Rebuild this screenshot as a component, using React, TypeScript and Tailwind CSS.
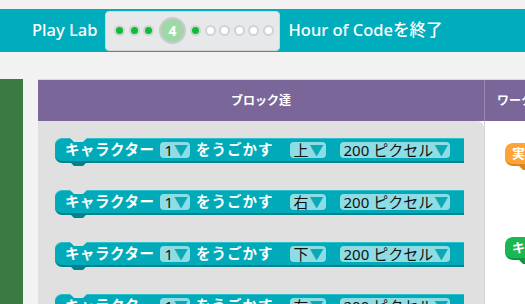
import React from 'react';

const jp = { fontFamily: '"Noto Sans", "Noto Sans CJK JP", sans-serif' };

function Dot({ done }: { done: boolean }) {
  return (
    <span
      className={`w-[11px] h-[11px] shrink-0 rounded-full border-2 border-[#d0d2d4] ${done ? 'bg-[#0cbf32]' : 'bg-white'}`}
    />
  );
}

function Field({ label }: { label: string }) {
  return (
    <span className="flex items-center h-[16px] rounded-[4px] bg-[#8fdde4] pl-[4px] pr-[2px] text-[15px] leading-none text-[#111] font-normal">
      {label}
      <span className="text-[#0aa9b5] text-[14px] ml-[1px]">▼</span>
    </span>
  );
}

function MoveBlock({ dir }: { dir: string }) {
  return (
    <div className="relative w-[409px] h-[25px] mb-[27px]">
      <div className="flex items-center h-[25px] rounded-l-[7px] bg-[#00aab8] border-t border-[#2cc0cb] border-b-2 border-b-[#00838e] pl-[10px] text-white text-[14.5px] font-bold whitespace-nowrap">
        <span className="tracking-[0.5px]">キャラクター</span>
        <span className="ml-[6px]"><Field label="1" /></span>
        <span className="ml-[6px] tracking-[1px]">をうごかす</span>
        <span className="ml-[16px]"><Field label={dir} /></span>
        <span className="ml-[14px]"><Field label="200 ピクセル" /></span>
      </div>
      {/* notch top */}
      <svg className="absolute left-[15px] top-0" width="18" height="5" viewBox="0 0 18 5">
        <path d="M0 0 L4 4 L13 4 L17 0 Z" fill="#e0e0e0" />
      </svg>
      {/* tab bottom */}
      <svg className="absolute left-[15px] top-[24px]" width="18" height="5" viewBox="0 0 18 5">
        <path d="M0 0 L4 4 L13 4 L17 0 Z" fill="#00838e" />
      </svg>
    </div>
  );
}

export default function App() {
  return (
    <div className="w-[525px] h-[304px] overflow-hidden bg-[#f2f2f2] flex flex-col" style={jp}>
      <div className="h-[9px] shrink-0" />

      {/* header */}
      <div className="h-[43px] shrink-0 bg-[#00adbc] flex items-center pl-[32px] text-white text-[16.5px] font-medium whitespace-nowrap">
        <span>Play Lab</span>
        <div className="ml-[8px] h-[40px] w-[175px] shrink-0 rounded-[4px] bg-[#e7e8ea] border border-[#d3d5d7] flex items-center pl-[8px] gap-[3.5px]">
          <Dot done />
          <Dot done />
          <Dot done />
          <span className="w-[27px] h-[27px] mx-[1px] shrink-0 rounded-full bg-[#9fd8a6] border-2 border-[#c9cbcd] flex items-center justify-center text-white text-[14px] font-bold">
            4
          </span>
          <Dot done />
          <Dot done={false} />
          <Dot done={false} />
          <Dot done={false} />
          <Dot done={false} />
          <Dot done={false} />
        </div>
        <span className="ml-[8px]">Hour of Codeを終了</span>
      </div>

      <div className="h-[27px] shrink-0" />

      <div className="flex flex-1 min-h-0">
        <div className="w-[23px] shrink-0 bg-[#3b7a40]" />
        <div className="w-[15px] shrink-0" />

        <div className="flex flex-col flex-1 min-w-0 border-t border-[#d8d8d8]">
          {/* column headers */}
          <div className="h-[41px] shrink-0 bg-[#7a6699] flex text-white text-[12px] font-bold whitespace-nowrap">
            <div className="w-[446px] shrink-0 flex items-center justify-center">ブロック達</div>
            <div className="flex-1 min-w-0 overflow-hidden border-l border-[#9a8cb0] flex items-center pl-[12px]">ワークスペース</div>
          </div>

          <div className="flex flex-1 bg-white">
            {/* toolbox */}
            <div className="w-[446px] shrink-0 bg-[#e0e0e0] rounded-tr-[7px] pt-[17px] pl-[17px]">
              <MoveBlock dir="上" />
              <MoveBlock dir="右" />
              <MoveBlock dir="下" />
              <MoveBlock dir="左" />
            </div>

            {/* workspace */}
            <div className="flex-1 min-w-0 overflow-hidden border-l border-[#d0d0d0] pl-[20px] pt-[22px]">
              <div className="relative w-[60px]">
                <div className="h-[23px] w-[60px] rounded-l-[8px] bg-[#ffa237] border-b-2 border-[#e0831a] text-white text-[13px] font-bold pl-[7px] leading-[21px] whitespace-nowrap">
                  実行
                </div>
                <svg className="absolute left-[14px] top-[23px]" width="18" height="5" viewBox="0 0 18 5">
                  <path d="M0 0 L4 4 L13 4 L17 0 Z" fill="#e0831a" />
                </svg>
              </div>
              <div className="relative w-[60px] mt-[71px]">
                <div className="h-[23px] w-[60px] rounded-l-[8px] bg-[#1ab852] border-b-2 border-[#0e9640] text-white text-[13px] font-bold pl-[7px] leading-[21px] whitespace-nowrap">
                  キャ
                </div>
                <svg className="absolute left-[14px] top-[23px]" width="18" height="5" viewBox="0 0 18 5">
                  <path d="M0 0 L4 4 L13 4 L17 0 Z" fill="#0e9640" />
                </svg>
              </div>
            </div>
          </div>
        </div>
      </div>
    </div>
  );
}
